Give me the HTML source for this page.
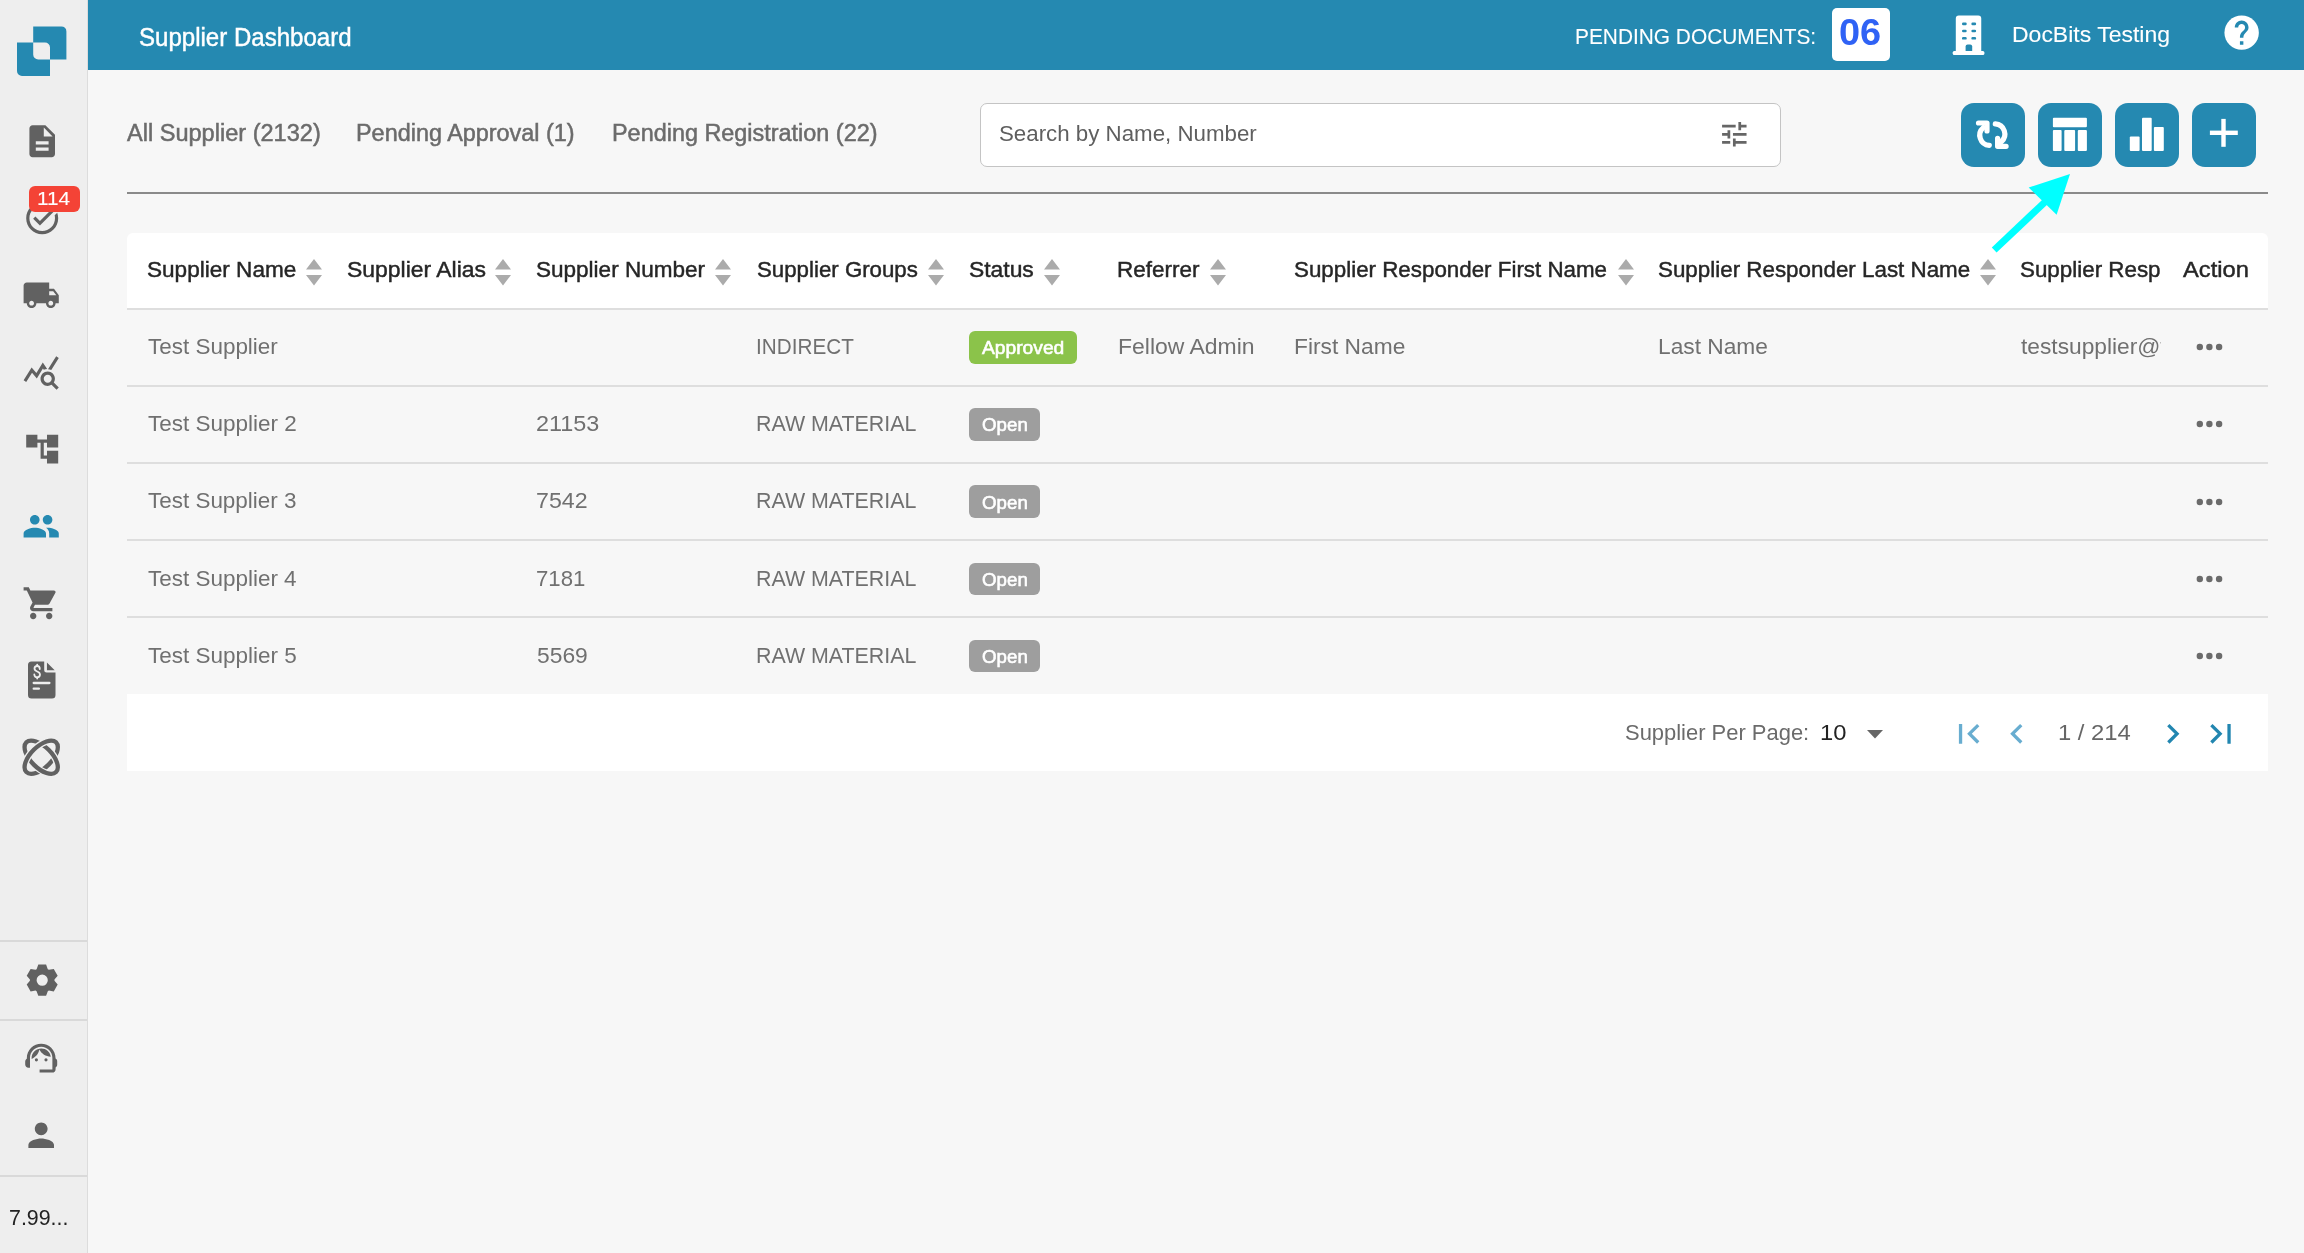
<!DOCTYPE html>
<html><head><meta charset="utf-8"><style>
*{margin:0;padding:0;box-sizing:border-box}
html,body{width:2304px;height:1253px;overflow:hidden;background:#f7f7f7;font-family:"Liberation Sans",sans-serif;position:relative}
.t{position:absolute;white-space:nowrap;line-height:1}
.abs,.sort,.dots{position:absolute;display:block}
#side{position:absolute;left:0;top:0;width:88px;height:1253px;background:#eeeeee;border-right:1px solid #dcdcdc}
#hdr{position:absolute;left:88px;top:0;width:2216px;height:70px;background:#2589b1}
#pdbox{position:absolute;left:1832px;top:8px;width:58px;height:53px;background:#fff;border-radius:5px}
#search{position:absolute;left:979.8px;top:102.7px;width:801.4px;height:64px;background:#fff;border:1.9px solid #c4c4c4;border-radius:7px}
#divline{position:absolute;left:127px;top:192px;width:2141px;height:2px;background:#8a8a8a}
#thead{position:absolute;left:127px;top:233px;width:2141px;height:77px;background:#fff;border-radius:6px 6px 0 0;border-bottom:2px solid #dedede}
.rline{position:absolute;left:127px;width:2141px;height:2px;background:#dedede}
#tfoot{position:absolute;left:127px;top:694.4px;width:2141px;height:77px;background:#fff}
#badge114{position:absolute;left:29.2px;top:186px;width:50.8px;height:25.8px;background:#f44336;border-radius:6px;color:#fff;font-size:19px;line-height:25.3px;text-align:center;padding-left:3px}
.sdiv{position:absolute;left:0;width:87px;height:2px;background:#d9d9d9}
.btn{position:absolute;top:103px;width:64px;height:64px;border-radius:13px;background:#2589b1}
.badge{position:absolute;height:32.5px;border-radius:6px;color:#fff;font-weight:700;font-size:17.5px;line-height:32.5px;padding-left:13px;white-space:nowrap}
.t{transform-origin:0 0}
.clipbox{position:absolute;overflow:hidden}
</style></head><body>
<div id="side"></div>
<div id="hdr"></div>
<div class="t" style="left:139.23px;top:25.13px;font-size:25.6px;color:#fff;font-weight:400;transform:scaleX(0.9397);-webkit-text-stroke:0.45px #fff;">Supplier Dashboard</div>
<div class="t" style="left:1574.65px;top:26.04px;font-size:22.4px;color:#fff;font-weight:400;transform:scaleX(0.9318);-webkit-text-stroke:0.1px #fff;">PENDING DOCUMENTS:</div>
<div id="pdbox"></div>
<div class="t" style="left:1839.46px;top:14.28px;font-size:37px;color:#2f62f5;font-weight:700;transform:scaleX(1.0241);">06</div>
<div class="t" style="left:2012.48px;top:23.54px;font-size:22.4px;color:#fff;font-weight:400;transform:scaleX(1.0264);-webkit-text-stroke:0.1px #fff;">DocBits Testing</div>
<div class="t" style="left:126.77px;top:121.73px;font-size:23px;color:#6b6b6b;font-weight:400;transform:scaleX(1.0239);-webkit-text-stroke:0.5px #6b6b6b;">All Supplier (2132)</div>
<div class="t" style="left:356.19px;top:121.73px;font-size:23px;color:#6b6b6b;font-weight:400;transform:scaleX(1.0180);-webkit-text-stroke:0.5px #6b6b6b;">Pending Approval (1)</div>
<div class="t" style="left:611.99px;top:121.73px;font-size:23px;color:#6b6b6b;font-weight:400;transform:scaleX(1.0179);-webkit-text-stroke:0.5px #6b6b6b;">Pending Registration (22)</div>
<div id="search"></div>
<div class="t" style="left:999.00px;top:122.74px;font-size:22.4px;color:#5f5f5f;font-weight:400;transform:scaleX(0.9957);">Search by Name, Number</div>
<div id="divline"></div>
<div id="thead"></div>
<div class="t" style="left:147.19px;top:259.24px;font-size:22.4px;color:#262626;font-weight:400;transform:scaleX(1.0080);-webkit-text-stroke:0.45px #262626;">Supplier Name</div>
<svg class="sort" style="left:306px;top:258.7px" width="16" height="27" viewBox="0 0 16 27"><path d="M8 0L16 10.5H0Z M0 16H16L8 26.5Z" fill="#ababab"/></svg>
<div class="t" style="left:346.68px;top:259.24px;font-size:22.4px;color:#262626;font-weight:400;transform:scaleX(1.0248);-webkit-text-stroke:0.45px #262626;">Supplier Alias</div>
<svg class="sort" style="left:495.2px;top:258.7px" width="16" height="27" viewBox="0 0 16 27"><path d="M8 0L16 10.5H0Z M0 16H16L8 26.5Z" fill="#ababab"/></svg>
<div class="t" style="left:536.49px;top:259.24px;font-size:22.4px;color:#262626;font-weight:400;transform:scaleX(1.0059);-webkit-text-stroke:0.45px #262626;">Supplier Number</div>
<svg class="sort" style="left:715.4px;top:258.7px" width="16" height="27" viewBox="0 0 16 27"><path d="M8 0L16 10.5H0Z M0 16H16L8 26.5Z" fill="#ababab"/></svg>
<div class="t" style="left:756.81px;top:259.24px;font-size:22.4px;color:#262626;font-weight:400;transform:scaleX(0.9944);-webkit-text-stroke:0.45px #262626;">Supplier Groups</div>
<svg class="sort" style="left:927.7px;top:258.7px" width="16" height="27" viewBox="0 0 16 27"><path d="M8 0L16 10.5H0Z M0 16H16L8 26.5Z" fill="#ababab"/></svg>
<div class="t" style="left:968.88px;top:259.24px;font-size:22.4px;color:#262626;font-weight:400;transform:scaleX(1.0202);-webkit-text-stroke:0.45px #262626;">Status</div>
<svg class="sort" style="left:1043.8px;top:258.7px" width="16" height="27" viewBox="0 0 16 27"><path d="M8 0L16 10.5H0Z M0 16H16L8 26.5Z" fill="#ababab"/></svg>
<div class="t" style="left:1117.42px;top:259.24px;font-size:22.4px;color:#262626;font-weight:400;transform:scaleX(1.0053);-webkit-text-stroke:0.45px #262626;">Referrer</div>
<svg class="sort" style="left:1209.8px;top:258.7px" width="16" height="27" viewBox="0 0 16 27"><path d="M8 0L16 10.5H0Z M0 16H16L8 26.5Z" fill="#ababab"/></svg>
<div class="t" style="left:1294.20px;top:259.24px;font-size:22.4px;color:#262626;font-weight:400;transform:scaleX(0.9982);-webkit-text-stroke:0.45px #262626;">Supplier Responder First Name</div>
<svg class="sort" style="left:1617.7px;top:258.7px" width="16" height="27" viewBox="0 0 16 27"><path d="M8 0L16 10.5H0Z M0 16H16L8 26.5Z" fill="#ababab"/></svg>
<div class="t" style="left:1657.90px;top:259.24px;font-size:22.4px;color:#262626;font-weight:400;transform:scaleX(0.9994);-webkit-text-stroke:0.45px #262626;">Supplier Responder Last Name</div>
<svg class="sort" style="left:1980px;top:258.7px" width="16" height="27" viewBox="0 0 16 27"><path d="M8 0L16 10.5H0Z M0 16H16L8 26.5Z" fill="#ababab"/></svg>
<div class="clipbox" style="left:0;top:0;width:2161px;height:1253px"><div class="t" style="left:2020.30px;top:259.24px;font-size:22.4px;color:#262626;font-weight:400;transform:scaleX(0.9994);-webkit-text-stroke:0.45px #262626;">Supplier Responder Email</div></div>
<div class="t" style="left:2182.67px;top:259.24px;font-size:22.4px;color:#262626;font-weight:400;transform:scaleX(1.0590);-webkit-text-stroke:0.45px #262626;">Action</div>
<div class="rline" style="top:384.9px"></div>
<div class="t" style="left:147.50px;top:336.24px;font-size:22.4px;color:#707070;font-weight:400;transform:scaleX(1.0029);">Test Supplier</div>
<div class="t" style="left:756.03px;top:336.24px;font-size:22.4px;color:#707070;font-weight:400;transform:scaleX(0.9251);">INDIRECT</div>
<div class="badge" style="left:969px;top:331.0px;width:108px;background:#8bc34a"></div>
<div class="t" style="left:982.17px;top:338.35px;font-size:19.2px;color:#fff;font-weight:400;transform:scaleX(1.0019);-webkit-text-stroke:0.6px #fff;">Approved</div>
<div class="t" style="left:1117.68px;top:336.24px;font-size:22.4px;color:#707070;font-weight:400;transform:scaleX(1.0256);">Fellow Admin</div>
<div class="t" style="left:1294.29px;top:336.24px;font-size:22.4px;color:#707070;font-weight:400;transform:scaleX(1.0166);">First Name</div>
<div class="t" style="left:1658.10px;top:336.24px;font-size:22.4px;color:#707070;font-weight:400;transform:scaleX(1.0154);">Last Name</div>
<div class="clipbox" style="left:0;top:0;width:2161px;height:1253px"><div class="t" style="left:2020.92px;top:336.24px;font-size:22.4px;color:#707070;font-weight:400;transform:scaleX(1.0154);">testsupplier@test.com</div></div>
<svg class="dots" style="left:2195px;top:342.3px" width="30" height="10"><circle cx="4.8" cy="5" r="3.2" fill="#6b6b6b"/><circle cx="14.4" cy="5" r="3.2" fill="#6b6b6b"/><circle cx="24.1" cy="5" r="3.2" fill="#6b6b6b"/></svg>
<div class="rline" style="top:462.0px"></div>
<div class="t" style="left:147.50px;top:413.34px;font-size:22.4px;color:#707070;font-weight:400;transform:scaleX(1.0048);">Test Supplier 2</div>
<div class="t" style="left:536.32px;top:413.34px;font-size:22.4px;color:#707070;font-weight:400;transform:scaleX(1.0462);">21153</div>
<div class="t" style="left:756.21px;top:413.34px;font-size:22.4px;color:#707070;font-weight:400;transform:scaleX(0.9548);">RAW MATERIAL</div>
<div class="badge" style="left:969px;top:408.3px;width:71px;background:#9e9e9e"></div>
<div class="t" style="left:981.75px;top:415.45px;font-size:19.2px;color:#fff;font-weight:400;transform:scaleX(0.9760);-webkit-text-stroke:0.6px #fff;">Open</div>
<svg class="dots" style="left:2195px;top:419.4px" width="30" height="10"><circle cx="4.8" cy="5" r="3.2" fill="#6b6b6b"/><circle cx="14.4" cy="5" r="3.2" fill="#6b6b6b"/><circle cx="24.1" cy="5" r="3.2" fill="#6b6b6b"/></svg>
<div class="rline" style="top:539.1px"></div>
<div class="t" style="left:147.50px;top:490.44px;font-size:22.4px;color:#707070;font-weight:400;transform:scaleX(1.0026);">Test Supplier 3</div>
<div class="t" style="left:536.34px;top:490.44px;font-size:22.4px;color:#707070;font-weight:400;transform:scaleX(1.0352);">7542</div>
<div class="t" style="left:756.21px;top:490.44px;font-size:22.4px;color:#707070;font-weight:400;transform:scaleX(0.9548);">RAW MATERIAL</div>
<div class="badge" style="left:969px;top:485.4px;width:71px;background:#9e9e9e"></div>
<div class="t" style="left:981.75px;top:492.55px;font-size:19.2px;color:#fff;font-weight:400;transform:scaleX(0.9760);-webkit-text-stroke:0.6px #fff;">Open</div>
<svg class="dots" style="left:2195px;top:496.5px" width="30" height="10"><circle cx="4.8" cy="5" r="3.2" fill="#6b6b6b"/><circle cx="14.4" cy="5" r="3.2" fill="#6b6b6b"/><circle cx="24.1" cy="5" r="3.2" fill="#6b6b6b"/></svg>
<div class="rline" style="top:616.2px"></div>
<div class="t" style="left:147.50px;top:567.54px;font-size:22.4px;color:#707070;font-weight:400;transform:scaleX(1.0034);">Test Supplier 4</div>
<div class="t" style="left:536.39px;top:567.54px;font-size:22.4px;color:#707070;font-weight:400;transform:scaleX(0.9911);">7181</div>
<div class="t" style="left:756.21px;top:567.54px;font-size:22.4px;color:#707070;font-weight:400;transform:scaleX(0.9548);">RAW MATERIAL</div>
<div class="badge" style="left:969px;top:562.5px;width:71px;background:#9e9e9e"></div>
<div class="t" style="left:981.75px;top:569.65px;font-size:19.2px;color:#fff;font-weight:400;transform:scaleX(0.9760);-webkit-text-stroke:0.6px #fff;">Open</div>
<svg class="dots" style="left:2195px;top:573.6px" width="30" height="10"><circle cx="4.8" cy="5" r="3.2" fill="#6b6b6b"/><circle cx="14.4" cy="5" r="3.2" fill="#6b6b6b"/><circle cx="24.1" cy="5" r="3.2" fill="#6b6b6b"/></svg>
<div class="t" style="left:147.50px;top:644.64px;font-size:22.4px;color:#707070;font-weight:400;transform:scaleX(1.0051);">Test Supplier 5</div>
<div class="t" style="left:536.61px;top:644.64px;font-size:22.4px;color:#707070;font-weight:400;transform:scaleX(1.0193);">5569</div>
<div class="t" style="left:756.21px;top:644.64px;font-size:22.4px;color:#707070;font-weight:400;transform:scaleX(0.9548);">RAW MATERIAL</div>
<div class="badge" style="left:969px;top:639.6px;width:71px;background:#9e9e9e"></div>
<div class="t" style="left:981.75px;top:646.75px;font-size:19.2px;color:#fff;font-weight:400;transform:scaleX(0.9760);-webkit-text-stroke:0.6px #fff;">Open</div>
<svg class="dots" style="left:2195px;top:650.7px" width="30" height="10"><circle cx="4.8" cy="5" r="3.2" fill="#6b6b6b"/><circle cx="14.4" cy="5" r="3.2" fill="#6b6b6b"/><circle cx="24.1" cy="5" r="3.2" fill="#6b6b6b"/></svg>
<div id="tfoot"></div>
<div class="t" style="left:1624.62px;top:721.74px;font-size:22.4px;color:#6b6b6b;font-weight:400;transform:scaleX(0.9800);">Supplier Per Page:</div>
<div class="t" style="left:1819.54px;top:721.74px;font-size:22.4px;color:#222;font-weight:400;transform:scaleX(1.0607);">10</div>
<svg class="abs" style="left:1867px;top:729.5px" width="16" height="9"><path d="M0 0H16L8 8.6Z" fill="#666"/></svg>
<div class="t" style="left:2057.64px;top:721.74px;font-size:22.4px;color:#666;font-weight:400;transform:scaleX(1.0631);">1 / 214</div>
<svg class="abs" style="left:0;top:0" width="88" height="90" viewBox="0 0 88 90"><path fill-rule="evenodd" fill="#2589b1" d="M17 42.6H33.2V26.4H61.4A5 5 0 0 1 66.4 31.4V59.4H50V75.9H22A5 5 0 0 1 17 70.9Z M33.2 42.6H45A5 5 0 0 1 50 47.6V59.4H38.2A5 5 0 0 1 33.2 54.4Z"/></svg>
<svg class="abs" style="left:22.7px;top:121.8px" width="38.40" height="38.40" viewBox="0 0 24 24"><path d="M14 2H6c-1.1 0-1.99.9-1.99 2L4 20c0 1.1.89 2 1.99 2H18c1.1 0 2-.9 2-2V8l-6-6zm2 16H8v-2h8v2zm0-4H8v-2h8v2zm-3-5V3.5L18.5 9H13z" fill="#616161" /></svg>
<svg class="abs" style="left:22.5px;top:198.6px" width="38.40" height="38.40" viewBox="0 0 24 24"><path d="M22 5.18L10.59 16.6l-4.24-4.24 1.41-1.41 2.83 2.83 10-10L22 5.18zm-2.21 5.04c.13.57.21 1.17.21 1.78 0 4.42-3.58 8-8 8s-8-3.58-8-8 3.58-8 8-8c1.58 0 3.04.46 4.28 1.25l1.44-1.44C16.1 2.67 14.13 2 12 2 6.48 2 2 6.48 2 12s4.48 10 10 10 10-4.48 10-10c0-1.19-.22-2.33-.6-3.39l-1.61 1.61z" fill="#616161" /></svg>
<div id="badge114"></div>
<div class="t" style="left:37.48px;top:189.25px;font-size:19.2px;color:#fff;font-weight:400;transform:scaleX(1.0807);-webkit-text-stroke:0.1px #fff;">114</div>
<svg class="abs" style="left:22.4px;top:275.9px" width="38.40" height="38.40" viewBox="0 0 24 24"><path d="M20 8h-3V4H3c-1.1 0-2 .9-2 2v11h2c0 1.66 1.34 3 3 3s3-1.34 3-3h6c0 1.66 1.34 3 3 3s3-1.34 3-3h2v-5l-3-4zM6 18.5c-.83 0-1.5-.67-1.5-1.5s.67-1.5 1.5-1.5 1.5.67 1.5 1.5-.67 1.5-1.5 1.5zm13.5-9l1.96 2.5H17V9.5h2.5zm-1.5 9c-.83 0-1.5-.67-1.5-1.5s.67-1.5 1.5-1.5 1.5.67 1.5 1.5-.67 1.5-1.5 1.5z" fill="#616161" /></svg>
<svg class="abs" style="left:22.4px;top:352.8px" width="38.40" height="38.40" viewBox="0 0 24 24"><path d="M19.88 18.47c.44-.7.7-1.51.7-2.39 0-2.49-2.01-4.5-4.5-4.5s-4.5 2.01-4.5 4.5 2.01 4.5 4.49 4.5c.88 0 1.7-.26 2.39-.7L21.58 23 23 21.58l-3.12-3.11zm-3.8.11c-1.38 0-2.5-1.12-2.5-2.5s1.12-2.5 2.5-2.5 2.5 1.12 2.5 2.5-1.12 2.5-2.5 2.5zm-.36-8.5c-.74.02-1.45.18-2.1.45l-.55-.83-3.8 6.18-3.01-3.52-3.63 5.81L1 17l5-8 3 3.5L13 6l2.72 4.08zm2.59.5c-.64-.28-1.33-.45-2.05-.49L21.38 2 23 3.18l-4.69 7.4z" fill="#616161" /></svg>
<svg class="abs" style="left:22.7px;top:430.2px" width="38.40" height="38.40" viewBox="0 0 24 24"><path d="M22 11V3h-7v3H9V3H2v8h7V8h2v10h4v3h7v-8h-7v3h-2V8h2v3z" fill="#616161" /></svg>
<svg class="abs" style="left:22.3px;top:507px" width="38.40" height="38.40" viewBox="0 0 24 24"><path d="M16 11c1.66 0 2.99-1.34 2.99-3S17.66 5 16 5c-1.66 0-3 1.34-3 3s1.34 3 3 3zm-8 0c1.66 0 2.99-1.34 2.99-3S9.66 5 8 5C6.34 5 5 6.34 5 8s1.34 3 3 3zm0 2c-2.33 0-7 1.17-7 3.5V19h14v-2.5c0-2.33-4.67-3.5-7-3.5zm8 0c-.29 0-.62.02-.97.05 1.16.84 1.97 1.97 1.97 3.45V19h6v-2.5c0-2.33-4.67-3.5-7-3.5z" fill="#2589b1" /></svg>
<svg class="abs" style="left:22.3px;top:583.6px" width="38.40" height="38.40" viewBox="0 0 24 24"><path d="M7 18c-1.1 0-1.99.9-1.99 2S5.9 22 7 22s2-.9 2-2-.9-2-2-2zM1 2v2h2l3.6 7.59-1.35 2.45c-.16.28-.25.61-.25.96 0 1.1.9 2 2 2h12v-2H7.42c-.14 0-.25-.11-.25-.25l.03-.12.9-1.63h7.45c.75 0 1.41-.41 1.75-1.03l3.58-6.49c.08-.14.12-.31.12-.48 0-.55-.45-1-1-1H5.21l-.94-2H1zm16 16c-1.1 0-1.99.9-1.99 2s.89 2 1.99 2 2-.9 2-2-.9-2-2-2z" fill="#616161" /></svg>
<svg class="abs" style="left:0;top:650px" width="88" height="60" viewBox="0 0 88 60"><path fill="#616161" d="M31.5 11.6H44.2V20.2A2.4 2.4 0 0 0 46.6 22.6H55.5V45A3.5 3.5 0 0 1 52 48.5H31.5A3.5 3.5 0 0 1 28 45V15.1A3.5 3.5 0 0 1 31.5 11.6Z"/><path fill="#616161" d="M46.95 12.4V20.2H54.7Z"/><g fill="none" stroke="#eeeeee" stroke-width="1.8" stroke-linecap="round"><path d="M39.8 19 C39.8 17, 38.6 16, 37.2 16 C35.6 16, 34.5 17.2, 34.5 18.6 C34.5 20.3, 35.8 21, 37.2 21.5 C38.7 22, 40 22.8, 40 24.6 C40 26.2, 38.8 27.3, 37.2 27.3 C35.6 27.3, 34.4 26.2, 34.3 24.5"/><path d="M37.2 14.6V16M37.2 27.3V28.6"/><path d="M33.7 33H49.4M33.7 38.7H38.9" stroke-width="2.3"/></g></svg>
<svg class="abs" style="left:22.4px;top:737.9px" width="38.4" height="38.4" viewBox="-19.2 -19.2 38.4 38.4"><defs><clipPath id="atUL"><path d="M-66 60L60 -66L-60 -60Z"/></clipPath><clipPath id="atLR"><path d="M66 -60L-60 66L60 60Z"/></clipPath><mask id="atMB" maskUnits="userSpaceOnUse" x="-20" y="-20" width="40" height="40"><rect x="-20" y="-20" width="40" height="40" fill="#fff"/><g clip-path="url(#atUL)" fill="none"><ellipse rx="21" ry="10.5" transform="rotate(-45)" stroke="#000" stroke-width="6.9" /></g></mask><mask id="atMA" maskUnits="userSpaceOnUse" x="-20" y="-20" width="40" height="40"><rect x="-20" y="-20" width="40" height="40" fill="#fff"/><g clip-path="url(#atLR)" fill="none"><ellipse rx="21" ry="10.5" transform="rotate(45)" stroke="#000" stroke-width="6.9" /></g></mask></defs><g fill="none"><g mask="url(#atMB)"><ellipse rx="21" ry="10.5" transform="rotate(45)" stroke="#616161" stroke-width="4.3" /></g><g mask="url(#atMA)"><ellipse rx="21" ry="10.5" transform="rotate(-45)" stroke="#616161" stroke-width="4.3" /></g></g></svg>
<svg class="abs" style="left:22.5px;top:960.6px" width="38.4" height="38.4" viewBox="0 0 38.4 38.4"><path fill-rule="evenodd" fill="#616161" d="M13.60 8.25 L15.30 3.58 L23.10 3.58 L24.80 8.25 L25.88 8.87 L30.78 8.01 L34.68 14.77 L31.48 18.57 L31.48 19.83 L34.68 23.63 L30.78 30.39 L25.88 29.53 L24.80 30.15 L23.10 34.82 L15.30 34.82 L13.60 30.15 L12.52 29.53 L7.62 30.39 L3.72 23.63 L6.92 19.83 L6.92 18.57 L3.72 14.77 L7.62 8.01 L12.52 8.87Z M19.2 13.6A5.6 5.6 0 1 0 19.2 24.8A5.6 5.6 0 1 0 19.2 13.6Z"/></svg>
<svg class="abs" style="left:22.3px;top:1039.2px" width="38.40" height="38.40" viewBox="0 0 24 24"><path d="M21 12.22C21 6.73 16.74 3 12 3c-4.69 0-9 3.65-9 9.28-.6.34-1 .98-1 1.72v2c0 1.1.9 2 2 2h1v-6.1c0-3.87 3.13-7 7-7s7 3.13 7 7V19h-8v2h8c1.1 0 2-.9 2-2v-1.22c.59-.31 1-.92 1-1.64v-2.3c0-.7-.41-1.31-1-1.62zM8 13a1 1 0 1 0 2 0a1 1 0 1 0-2 0zM14 13a1 1 0 1 0 2 0a1 1 0 1 0-2 0zM18 11.03C17.52 8.18 15.04 6 12.05 6c-3.03 0-6.29 2.51-6.03 6.45 2.47-1.01 4.33-3.21 4.86-5.89 1.31 2.63 4 4.44 7.12 4.47z" fill="#616161" /></svg>
<svg class="abs" style="left:22.1px;top:1116.3px" width="38.40" height="38.40" viewBox="0 0 24 24"><path d="M12 12c2.21 0 4-1.79 4-4s-1.79-4-4-4-4 1.79-4 4 1.79 4 4 4zm0 2c-2.67 0-8 1.34-8 4v2h16v-2c0-2.66-5.33-4-8-4z" fill="#616161" /></svg>
<div class="sdiv" style="top:940px"></div>
<div class="sdiv" style="top:1018.5px"></div>
<div class="sdiv" style="top:1175px"></div>
<div class="t" style="left:8.93px;top:1206.64px;font-size:22.4px;color:#222;font-weight:400;transform:scaleX(0.9539);">7.99...</div>
<svg class="abs" style="left:1952px;top:15px" width="34" height="42" viewBox="0 0 34 42"><path fill="#fff" d="M6.8 0.6H26.25A3 3 0 0 1 29.25 3.6V36.5H3.8V3.6A3 3 0 0 1 6.8 0.6Z"/><rect x="0.7" y="36" width="31.7" height="4" rx="1.5" fill="#fff"/><g fill="#2589b1"><rect x="10" y="7.6" width="4.7" height="2.6" rx="1.2"/><rect x="19.4" y="7.6" width="4.7" height="2.6" rx="1.2"/><rect x="10" y="14.7" width="4.7" height="2.6" rx="1.2"/><rect x="19.4" y="14.7" width="4.7" height="2.6" rx="1.2"/><rect x="10" y="22" width="4.7" height="2.6" rx="1.2"/><rect x="19.4" y="22" width="4.7" height="2.6" rx="1.2"/><path d="M13.6 36V31.5A2 2 0 0 1 15.6 29.5H18.2A2 2 0 0 1 20.2 31.5V36Z"/></g></svg>
<svg class="abs" style="left:2221.1px;top:11.7px" width="41.3" height="41.3" viewBox="0 0 24 24"><circle cx="12" cy="12" r="10" fill="#fff"/><path fill="#2589b1" d="M13 19h-2v-2h2v2zm2.07-7.75l-.9.92C13.45 12.9 13 13.5 13 15h-2v-.5c0-1.1.45-2.1 1.17-2.83l1.24-1.26c.37-.36.59-.86.59-1.41 0-1.1-.9-2-2-2s-2 .9-2 2H8c0-2.21 1.79-4 4-4s4 1.79 4 4c0 .88-.36 1.68-.93 2.25z"/></svg>
<svg class="abs" style="left:1717.7px;top:117.8px" width="32.64" height="32.64" viewBox="0 0 24 24"><path d="M3 17v2h6v-2H3zM3 5v2h10V5H3zm10 16v-2h8v-2h-8v-2h-2v6h2zM7 9v2H3v2h4v2h2V9H7zm14 4v-2H11v2h10zm-6-4h2V7h4V5h-4V3h-2v6z" fill="#666" /></svg>
<div class="btn" style="left:1961px"></div>
<div class="btn" style="left:2038px"></div>
<div class="btn" style="left:2115px"></div>
<div class="btn" style="left:2192px"></div>
<svg class="abs" style="left:1961px;top:103px" width="64" height="64" viewBox="0 0 64 64"><g fill="none" stroke="#fff" stroke-width="5.2" stroke-linecap="round" stroke-linejoin="round"><path d="M17.5 20H26V28"/><path d="M22.3 24.6A10.15 10.15 0 0 0 28.3 42.4"/><path d="M45.1 43.3H36.6V35.3"/><path d="M40.3 38.7A10.15 10.15 0 0 0 34.3 20.9"/></g></svg>
<svg class="abs" style="left:2038px;top:103px" width="64" height="64" viewBox="0 0 64 64"><g fill="#fff"><rect x="14.9" y="14.8" width="34" height="9.5" rx="1"/><rect x="14.9" y="27" width="8.7" height="21.1" rx="1"/><rect x="26.3" y="27" width="10.8" height="21.1" rx="1"/><rect x="39.8" y="27" width="9.1" height="21.1" rx="1"/></g></svg>
<svg class="abs" style="left:2115px;top:103px" width="64" height="64" viewBox="0 0 64 64"><g fill="#fff"><rect x="14.8" y="33.5" width="9.8" height="14.6" rx="1"/><rect x="27" y="14.8" width="9.7" height="33.3" rx="1"/><rect x="38.9" y="24" width="9.9" height="24.1" rx="1"/></g></svg>
<svg class="abs" style="left:2192px;top:103px" width="64" height="64" viewBox="0 0 64 64"><g fill="#fff"><rect x="17.9" y="27.6" width="27.9" height="4.4"/><rect x="29.3" y="15.9" width="4.4" height="27.9"/></g></svg>
<svg class="abs" style="left:0;top:0" width="2304" height="300" viewBox="0 0 2304 300"><path d="M1994.2 250L2045 202" stroke="#00ffff" stroke-width="7" stroke-linecap="butt"/><path d="M2070 174L2028.7 187.5L2056.6 214.8Z" fill="#00ffff"/></svg>
<svg class="abs" style="left:1948.5px;top:713.5px" width="39.60" height="39.60" viewBox="0 0 24 24"><path d="M18.41 16.59L13.82 12l4.59-4.59L17 6l-6 6 6 6zM6 6h2v12H6z" fill="#68add0" /></svg>
<svg class="abs" style="left:1996.8px;top:713.5px" width="39.60" height="39.60" viewBox="0 0 24 24"><path d="M15.41 7.41L14 6l-6 6 6 6 1.41-1.41L10.83 12z" fill="#68add0" /></svg>
<svg class="abs" style="left:2153.2px;top:713.5px" width="39.60" height="39.60" viewBox="0 0 24 24"><path d="M10 6L8.59 7.41 13.17 12l-4.58 4.59L10 18l6-6z" fill="#2286b0" /></svg>
<svg class="abs" style="left:2201.3px;top:713.5px" width="39.60" height="39.60" viewBox="0 0 24 24"><path d="M5.59 7.41L10.18 12l-4.59 4.59L7 18l6-6-6-6zM16 6h2v12h-2z" fill="#2286b0" /></svg>
</body></html>
